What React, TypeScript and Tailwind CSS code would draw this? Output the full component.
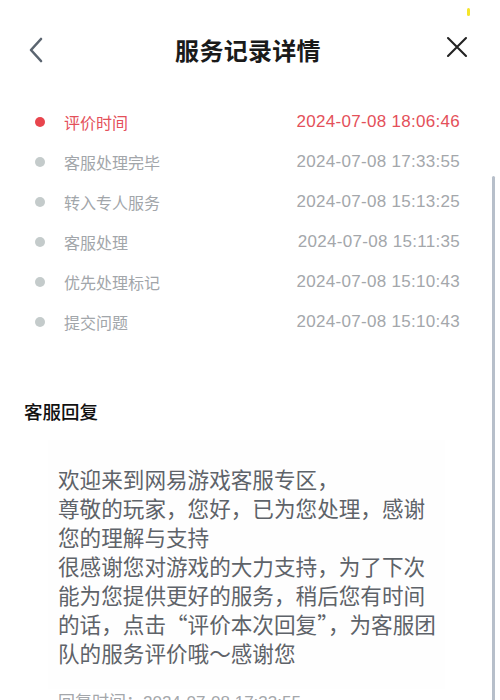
import React from 'react';

const records = [
  { label: '评价时间', time: '2024-07-08 18:06:46', active: true },
  { label: '客服处理完毕', time: '2024-07-08 17:33:55' },
  { label: '转入专人服务', time: '2024-07-08 15:13:25' },
  { label: '客服处理', time: '2024-07-08 15:11:35' },
  { label: '优先处理标记', time: '2024-07-08 15:10:43' },
  { label: '提交问题', time: '2024-07-08 15:10:43' },
];

const replyLines = [
  '欢迎来到网易游戏客服专区，',
  '尊敬的玩家，您好，已为您处理，感谢',
  '您的理解与支持',
  '很感谢您对游戏的大力支持，为了下次',
  '能为您提供更好的服务，稍后您有时间',
  '的话，点击“评价本次回复”，为客服团',
  '队的服务评价哦～感谢您',
];

const cjk = 'font-["Noto_Sans_CJK_SC","Noto_Sans",sans-serif]';

const App = () => {
  return (
    <div className={`relative w-[500px] h-[700px] overflow-hidden bg-white ${cjk}`}>
      {/* status bar mark + scroll indicator */}
      <div className="absolute left-[467px] top-[8px] w-[3px] h-[8px] rounded-sm bg-[#f5e52a]" />
      <div className="absolute left-[492px] top-[176px] w-[3px] h-[540px] rounded-full bg-[#b7bfca]" />

      <header className="h-[100px] flex items-center justify-between pl-[28px] pr-[30px]">
        <button type="button" className="w-[20px] h-[30px] flex items-center">
          <svg width="16" height="26" viewBox="0 0 16 26" fill="none">
            <path
              d="M13 2 L3 13 L13 24"
              stroke="#5b6570"
              strokeWidth="2.6"
              strokeLinecap="round"
              strokeLinejoin="round"
            />
          </svg>
        </button>
        <h1 className="text-[24px] leading-none font-semibold text-[#1a1a1a] tracking-[0.3px] pl-[4px]">
          服务记录详情
        </h1>
        <button type="button" className="w-[26px] h-[26px] flex items-center justify-center -mt-[6px]">
          <svg width="24" height="24" viewBox="0 0 24 24" fill="none">
            <path d="M3 3 L21 21 M21 3 L3 21" stroke="#222" strokeWidth="2.1" strokeLinecap="round" />
          </svg>
        </button>
      </header>

      <ul className="pt-[2px] pl-[35px] pr-[40px]">
        {records.map((r) => (
          <li key={r.label} className="h-[40px] flex items-center">
            <span
              className={`w-[10px] h-[10px] rounded-full ${r.active ? 'bg-[#e8454d]' : 'bg-[#c4cbcb]'}`}
            />
            <span
              className={`ml-[19px] flex-1 text-[16px] ${r.active ? 'text-[#e4505a]' : 'text-[#a2a6aa]'}`}
            >
              {r.label}
            </span>
            <span
              className={`font-["Liberation_Sans",sans-serif] text-[17px] tracking-[0.3px] ${r.active ? 'text-[#e4505a]' : 'text-[#a4a7ab]'}`}
            >
              {r.time}
            </span>
          </li>
        ))}
      </ul>

      <h2 className="mt-[56px] pl-[24px] text-[18.5px] leading-[26px] font-medium text-[#111]">客服回复</h2>

      <section className="mt-[16px] ml-[48px] w-[397px] bg-[#fefefe] pt-[24px] pb-[22px] pl-[10px]">
        {replyLines.map((line) => (
          <p key={line} className="text-[21.6px] leading-[29px] text-[#5e6369] whitespace-nowrap">
            {line}
          </p>
        ))}
      </section>

      <p className="pl-[58px] text-[17px] leading-[24px] text-[#a4a7ab]">
        回复时间：<span className='font-["Liberation_Sans",sans-serif]'>2024-07-08 17:33:55</span>
      </p>
    </div>
  );
};

export default App;
